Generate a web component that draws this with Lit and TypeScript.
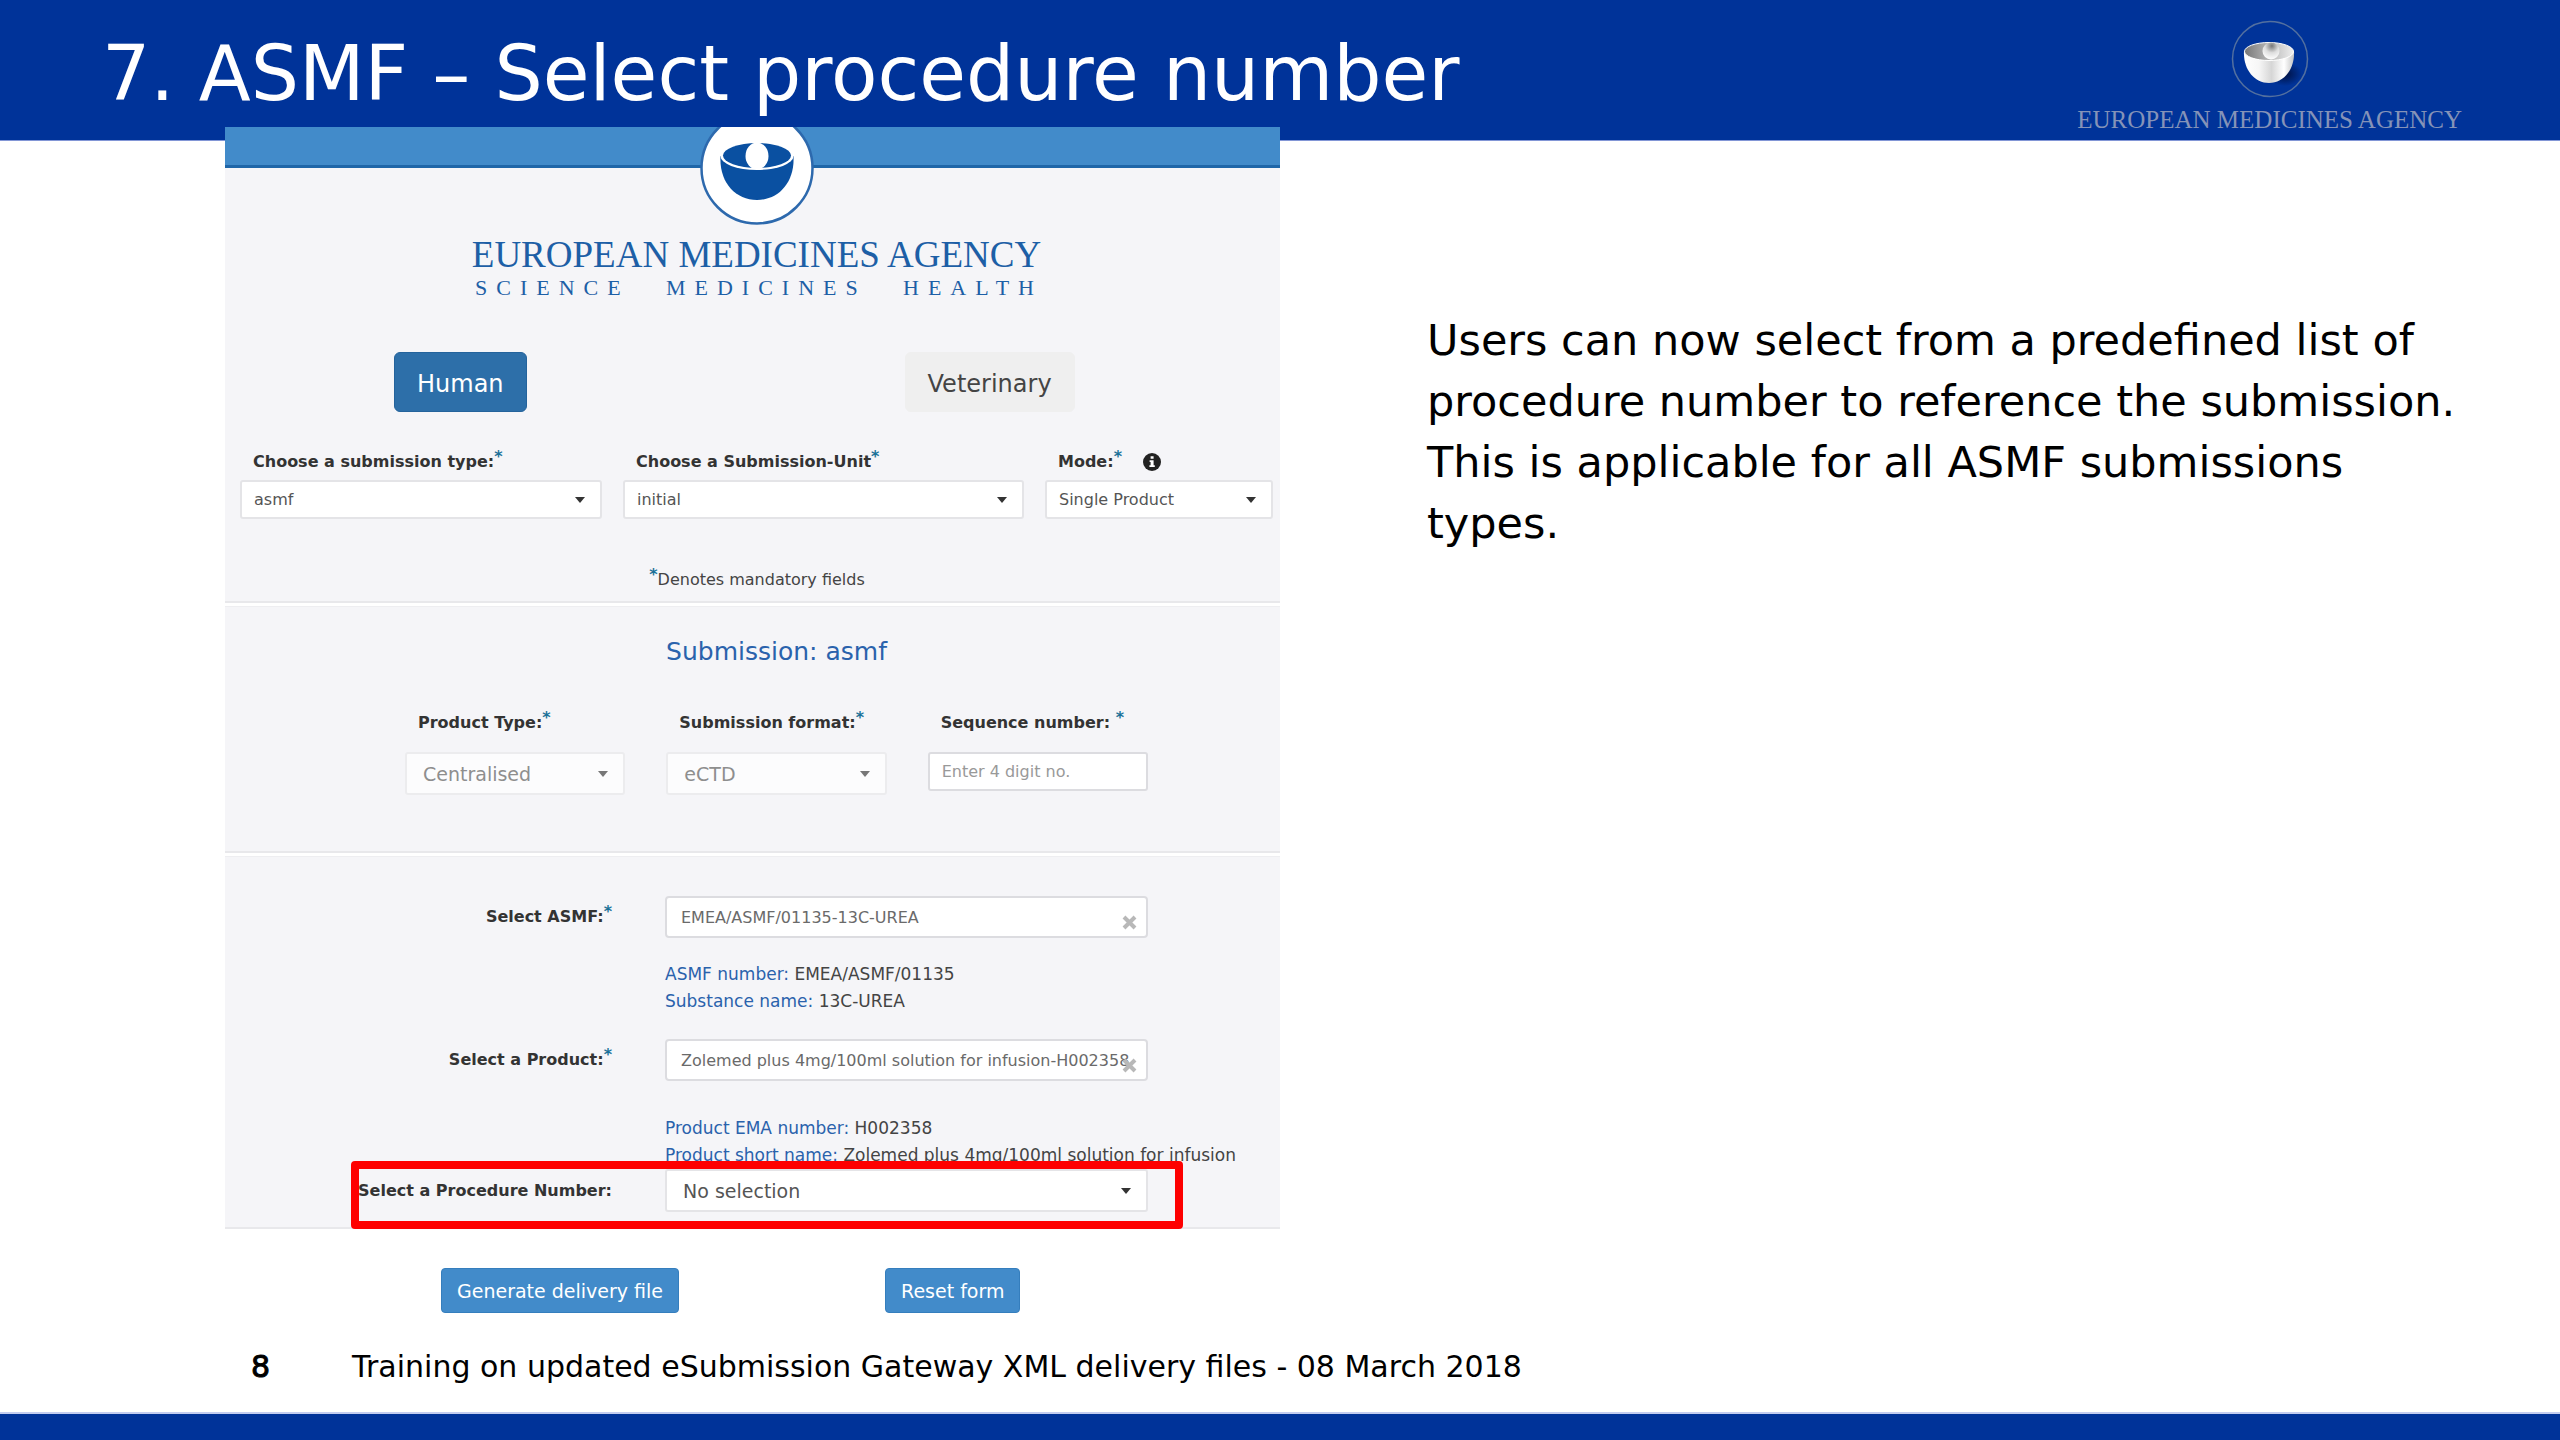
import { LitElement, html, css, svg, nothing } from "lit";
import { customElement } from "lit/decorators.js";
import { classMap } from "lit/directives/class-map.js";

interface SelectOptions {
  muted?: boolean;
  large?: boolean;
}

const star = html`<sup class="star">*</sup>`;

const infoIcon = html`<svg class="info" viewBox="0 0 18 18" aria-hidden="true">
  <circle cx="9" cy="9" r="9" fill="#222"></circle>
  <path d="M7.6 3.2h3v2.6h-3zM6.6 7.2h4v5h1.2v1.9H6.4v-1.9h1.2V9.1h-1z" fill="#fff"></path>
</svg>`;

@customElement("app-root")
export class AppRoot extends LitElement {
  static styles = css`
    :host {
      display: block;
      font-family: "DejaVu Sans", Verdana, sans-serif;
      color: #000;
    }
    .slide {
      display: flex;
      flex-direction: column;
      min-height: 100vh;
      background: #fff;
    }
    .top {
      display: flex;
      justify-content: space-between;
      align-items: flex-start;
      height: 141px;
      box-sizing: border-box;
      padding: 20px 98px 0 102px;
      border-bottom: 1px solid #8296d6;
      background: #003399;
    }
    .title {
      margin: 9px 0 0;
      color: #fff;
      font-size: 76px;
      line-height: 90px;
      font-weight: 400;
      white-space: nowrap;
    }
    .agency {
      display: flex;
      flex-direction: column;
      align-items: center;
    }
    .agency-mark {
      width: 78px;
      height: 78px;
    }
    .agency-name {
      margin-top: 8px;
      color: #8593b8;
      font-family: "Liberation Serif", serif;
      font-size: 25px;
      line-height: 28px;
      white-space: nowrap;
    }
    .body {
      flex: 1;
      display: grid;
      grid-template-columns: minmax(0, 1055fr) minmax(0, 1043fr);
      column-gap: 147px;
      padding: 0 90px 0 225px;
    }
    .form {
      margin-top: -14px;
    }
    .bar {
      height: 38px;
      background: #428bca;
      border-bottom: 3px solid #1f66a8;
    }
    .section {
      background: #f5f5f8;
      border-bottom: 2px solid #e8e8eb;
    }
    .section + .section {
      margin-top: 3px;
      border-top: 1px solid #eeeef1;
    }
    .brand {
      display: flex;
      flex-direction: column;
      align-items: center;
      padding-left: 8px;
      color: #1d5fa6;
      font-family: "Liberation Serif", serif;
    }
    .brand-mark {
      width: 116px;
      height: 100px;
      margin-top: -41px;
    }
    .brand-name {
      margin-top: 8px;
      font-size: 37px;
      line-height: 40px;
      white-space: nowrap;
    }
    .brand-tag {
      display: flex;
      justify-content: space-between;
      width: 568px;
      padding-left: 5px;
      font-size: 22px;
      line-height: 26px;
      letter-spacing: 9px;
    }
    .domains {
      display: flex;
      gap: 378px;
      padding-left: 169px;
      margin: 51px 0 38px;
    }
    .domain {
      height: 60px;
      padding: 3px 22px 0;
      border: 1px solid #efefef;
      border-radius: 6px;
      background: #efefef;
      color: #444;
      font-family: inherit;
      font-size: 24px;
    }
    .domain.active {
      background: #2d6fa9;
      border-color: #24639c;
      color: #fff;
    }
    .row-main {
      display: grid;
      grid-template-columns: minmax(0, 362fr) minmax(0, 401fr) minmax(0, 228fr);
      gap: 21px;
      padding: 0 7px 0 15px;
    }
    .row-detail {
      display: grid;
      grid-template-columns: repeat(3, minmax(0, 1fr));
      gap: 41px;
      padding: 0 132px 56px 180px;
    }
    .field {
      display: flex;
      flex-direction: column;
      gap: 6px;
    }
    .row-detail .field {
      gap: 17px;
    }
    .caption {
      display: flex;
      align-items: center;
      gap: 21px;
      padding-left: 13px;
    }
    .label {
      color: #333;
      font-size: 16px;
      line-height: 24px;
      font-weight: 700;
      white-space: nowrap;
    }
    .star {
      color: #1b7198;
      font-size: 16px;
      font-weight: 700;
      line-height: 0;
      vertical-align: 5px;
    }
    .info {
      width: 18px;
      height: 18px;
    }
    .box {
      display: grid;
      align-items: center;
    }
    .select,
    .entry {
      grid-area: 1 / 1;
      width: 100%;
      height: 39px;
      box-sizing: border-box;
      margin: 0;
      padding: 0 36px 0 12px;
      border: 2px solid #e4e4e7;
      border-radius: 3px;
      background: #fff;
      color: #555;
      font-family: inherit;
      font-size: 16px;
      appearance: none;
    }
    .select.large {
      height: 43px;
      padding-left: 16px;
      font-size: 19px;
    }
    .select.muted {
      background: #fcfcfd;
      border-color: #ececee;
      color: #8e8e8e;
      opacity: 1;
    }
    .entry {
      padding: 0 12px;
      border-color: #dcdce0;
    }
    .entry.tall {
      height: 42px;
      padding: 0 6px 0 14px;
      border-radius: 4px;
      color: #6a6a6a;
    }
    .entry::placeholder {
      color: #999;
      opacity: 1;
    }
    .arrow {
      grid-area: 1 / 1;
      justify-self: end;
      width: 10px;
      height: 6px;
      margin-right: 17px;
      fill: #333;
      pointer-events: none;
    }
    .arrow.muted {
      fill: #777;
    }
    .clear {
      grid-area: 1 / 1;
      justify-self: end;
      display: flex;
      margin: 10px 11px 0 0;
      padding: 0;
      border: 0;
      background: none;
    }
    .cross {
      width: 15px;
      height: 15px;
      stroke: #b8b8b8;
      stroke-width: 4;
      fill: none;
    }
    .note {
      margin: 49px 0 0;
      padding: 0 0 9px 9px;
      color: #444;
      font-size: 16px;
      line-height: 24px;
      text-align: center;
    }
    .subtitle {
      margin: 0;
      padding: 29px 0 43px 48px;
      color: #2a62ac;
      font-size: 25px;
      line-height: 32px;
      font-weight: 400;
      text-align: center;
    }
    .picks {
      padding: 39px 0 15px;
    }
    .pick {
      position: relative;
      display: grid;
      grid-template-columns: minmax(0, 387fr) minmax(0, 483fr);
      column-gap: 53px;
      align-items: center;
      padding-right: 132px;
    }
    .pick .label {
      justify-self: end;
    }
    .facts {
      grid-column: 2;
      margin: 23px 0 24px;
      color: #444;
      font-size: 17px;
      line-height: 27px;
      white-space: nowrap;
    }
    .facts.tight {
      margin: 34px 0 0;
    }
    .fact {
      margin: 0;
    }
    .key {
      color: #2a62ac;
    }
    .highlight {
      position: absolute;
      inset: -8px 97px -17px 126px;
      border: 8px solid #fe0000;
      border-radius: 4px;
      pointer-events: none;
    }
    .actions {
      display: flex;
      gap: 206px;
      padding: 39px 0 0 216px;
    }
    .action {
      height: 45px;
      padding: 0 15px;
      border: 1px solid #357ebd;
      border-radius: 4px;
      background: #428bca;
      color: #fff;
      font-family: inherit;
      font-size: 19px;
      white-space: nowrap;
    }
    .copy {
      margin: 169px 0 0;
      font-size: 43px;
      line-height: 61px;
    }
    .foot {
      display: flex;
      gap: 82px;
      padding: 0 0 26px 251px;
      border-bottom: 2px solid #c3cdf0;
      font-size: 30px;
      line-height: 38px;
    }
    .page {
      -webkit-text-stroke: 1px #000;
    }
    .strip {
      height: 26px;
      background: #003399;
    }
  `;

  private agencyMark() {
    return svg`<svg class="agency-mark" viewBox="0 0 78 78" aria-hidden="true">
      <defs>
        <linearGradient id="cup" x1="0" x2="1">
          <stop offset="0" stop-color="#fff"/><stop offset=".3" stop-color="#f6f6f6"/>
          <stop offset=".55" stop-color="#d6d6d6"/>
          <stop offset=".8" stop-color="#fff"/><stop offset="1" stop-color="#c4c4c4"/>
        </linearGradient>
        <linearGradient id="hollow" x1="0" x2="1">
          <stop offset="0" stop-color="#777"/><stop offset=".4" stop-color="#aaa"/><stop offset="1" stop-color="#eee"/>
        </linearGradient>
        <radialGradient id="ball" cx=".55" cy=".2" r=".8">
          <stop offset="0" stop-color="#777"/><stop offset=".5" stop-color="#ddd"/><stop offset="1" stop-color="#fff"/>
        </radialGradient>
        <radialGradient id="shade">
          <stop offset="0" stop-color="#001040"/><stop offset="1" stop-color="#001040" stop-opacity="0"/>
        </radialGradient>
      </defs>
      <circle cx="39" cy="39" r="37.5" fill="none" stroke="#53709f" stroke-width="1.5"/>
      <ellipse cx="54" cy="54" rx="17" ry="12" fill="url(#shade)"/>
      <path d="M13 31C12 49 23 63 38 63S64 49 63 31z" fill="url(#cup)"/>
      <ellipse cx="38" cy="31.500" rx="24.500" ry="9" fill="url(#hollow)" stroke="#fff"/>
      <circle cx="40" cy="31" r="8.500" fill="url(#ball)"/>
    </svg>`;
  }

  private brandMark() {
    return svg`<svg class="brand-mark" viewBox="0 0 116 100" aria-hidden="true">
      <circle cx="58" cy="41" r="55.500" fill="#fff" stroke="#2d69ad" stroke-width="2.500"/>
      <path d="M21.500 29C20 55 36 73 58 73S96 55 94.500 29z" fill="#0a50a1"/>
      <ellipse cx="58" cy="29" rx="36.500" ry="14" fill="#fff"/>
      <ellipse cx="58" cy="28.500" rx="34" ry="12.500" fill="#0a50a1"/>
      <ellipse cx="58" cy="29" rx="11.500" ry="13.500" fill="#fff"/>
    </svg>`;
  }

  private select(id: string, value: string, { muted = false, large = false }: SelectOptions = {}) {
    return html`<div class="box">
      <select id=${id} class=${classMap({ select: true, muted, large })} ?disabled=${muted}>
        <option>${value}</option>
      </select>
      <svg class=${classMap({ arrow: true, muted })} viewBox="0 0 10 6" aria-hidden="true">
        <path d="M0 0h10L5 6z"></path>
      </svg>
    </div>`;
  }

  private selectField(id: string, label: string, value: string, options: SelectOptions = {}, info = false) {
    return html`<div class="field">
      <div class="caption">
        <label class="label" for=${id}>${label}${star}</label>${info ? infoIcon : nothing}
      </div>
      ${this.select(id, value, options)}
    </div>`;
  }

  private picker(id: string, value: string) {
    return html`<div class="box">
      <input class="entry tall" id=${id} type="text" .value=${value} />
      <button class="clear" type="button" aria-label="Clear">
        <svg class="cross" viewBox="0 0 15 15" aria-hidden="true"><path d="M2 2l11 11M13 2L2 13"></path></svg>
      </button>
    </div>`;
  }

  private fact(key: string, value: string) {
    return html`<p class="fact"><span class="key">${key}</span> ${value}</p>`;
  }

  render() {
    return html`
      <div class="slide">
        <header class="top">
          <h1 class="title">7. ASMF – Select procedure number</h1>
          <div class="agency">
            ${this.agencyMark()}
            <div class="agency-name">EUROPEAN MEDICINES AGENCY</div>
          </div>
        </header>

        <main class="body">
          <form class="form">
            <div class="bar"></div>
            <section class="section">
              <div class="brand">
                ${this.brandMark()}
                <div class="brand-name">EUROPEAN MEDICINES AGENCY</div>
                <div class="brand-tag"><span>SCIENCE</span><span>MEDICINES</span><span>HEALTH</span></div>
              </div>
              <div class="domains">
                <button class="domain active" type="button">Human</button>
                <button class="domain" type="button">Veterinary</button>
              </div>
              <div class="row-main">
                ${this.selectField("type", "Choose a submission type:", "asmf")}
                ${this.selectField("unit", "Choose a Submission-Unit", "initial")}
                ${this.selectField("mode", "Mode:", "Single Product", {}, true)}
              </div>
              <p class="note">${star}Denotes mandatory fields</p>
            </section>

            <section class="section">
              <h2 class="subtitle">Submission: asmf</h2>
              <div class="row-detail">
                ${this.selectField("product-type", "Product Type:", "Centralised", { muted: true, large: true })}
                ${this.selectField("format", "Submission format:", "eCTD", { muted: true, large: true })}
                <div class="field">
                  <div class="caption">
                    <label class="label" for="sequence">Sequence number: ${star}</label>
                  </div>
                  <input class="entry" id="sequence" type="text" placeholder="Enter 4 digit no." />
                </div>
              </div>
            </section>

            <section class="section picks">
              <div class="pick">
                <label class="label" for="asmf">Select ASMF:${star}</label>
                ${this.picker("asmf", "EMEA/ASMF/01135-13C-UREA")}
                <div class="facts">
                  ${this.fact("ASMF number:", "EMEA/ASMF/01135")} ${this.fact("Substance name:", "13C-UREA")}
                </div>
              </div>
              <div class="pick">
                <label class="label" for="product">Select a Product:${star}</label>
                ${this.picker("product", "Zolemed plus 4mg/100ml solution for infusion-H002358")}
                <div class="facts tight">
                  ${this.fact("Product EMA number:", "H002358")}
                  ${this.fact("Product short name:", "Zolemed plus 4mg/100ml solution for infusion")}
                </div>
              </div>
              <div class="pick">
                <label class="label" for="procedure">Select a Procedure Number:</label>
                ${this.select("procedure", "No selection", { large: true })}
                <div class="highlight"></div>
              </div>
            </section>

            <div class="actions">
              <button class="action" type="button">Generate delivery file</button>
              <button class="action" type="button">Reset form</button>
            </div>
          </form>

          <p class="copy">
            Users can now select from a predefined list of procedure number to reference the submission. This is
            applicable for all ASMF submissions types.
          </p>
        </main>

        <footer>
          <div class="foot">
            <span class="page">8</span>
            <span>Training on updated eSubmission Gateway XML delivery files - 08 March 2018</span>
          </div>
          <div class="strip"></div>
        </footer>
      </div>
    `;
  }
}
